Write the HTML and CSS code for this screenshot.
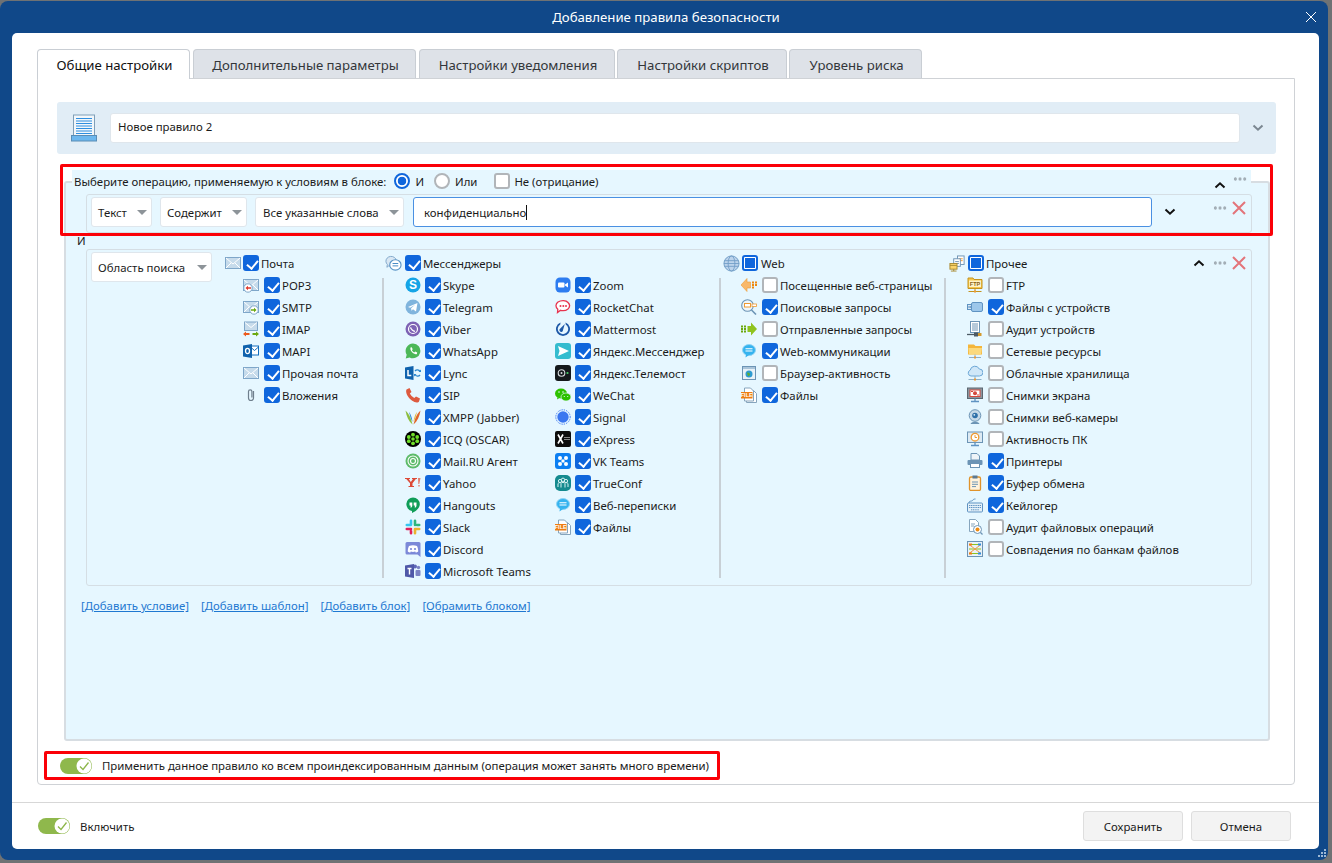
FILE: index.html
```html
<!DOCTYPE html>
<html lang="ru">
<head>
<meta charset="utf-8">
<title>Добавление правила безопасности</title>
<link rel="stylesheet" href="styles.css">
</head>
<body>
<svg class="defs" aria-hidden="true">
  <symbol id="mail" viewBox="0 0 16 16"><rect x=".5" y="2.500" width="15" height="11" fill="#c6dbeb" stroke="#7ea6c9"/><path d="M1 3l7 6 7-6M1 13l5-5M15 13l-5-5" fill="none" stroke="#fff"/></symbol>
  <symbol id="pop3" viewBox="0 0 16 16"><use href="#mail"/><circle cx="5" cy="11" r="4.200" fill="#fff" stroke="#7ea6c9"/><path d="M2.500 11L5 8.800v1.400h3v1.600H5v1.400z" fill="#e0392b"/></symbol>
  <symbol id="smtp" viewBox="0 0 16 16"><use href="#mail"/><circle cx="11" cy="11" r="4.200" fill="#fff" stroke="#7ea6c9"/><path d="M13.500 11L11 8.800v1.400H8v1.600h3v1.400z" fill="#6aa80e"/></symbol>
  <symbol id="imap" viewBox="0 0 16 16"><rect x="1.500" y="1" width="13" height="8.500" fill="#c6dbeb" stroke="#7ea6c9"/><path d="M2 1.500l6 5 6-5" fill="none" stroke="#fff"/><path d="M0 13l3-2.400v1.500h3.500v1.800H3v1.500z" fill="#ec5a1c"/><path d="M16 13l-3-2.400v1.500H9.500v1.800H13v1.500z" fill="#6aa80e"/></symbol>
  <symbol id="mapi" viewBox="0 0 16 16"><rect x="7" y="3" width="8.500" height="9" fill="#fff" stroke="#0f6cbd"/><path d="M7.500 4l4 3.500 4-3.500" fill="none" stroke="#0f6cbd"/><path d="M0 2.500L9 1v14L0 13.500z" fill="#0f62ad"/><ellipse cx="4.500" cy="8" rx="2" ry="2.600" fill="none" stroke="#fff" stroke-width="1.300"/></symbol>
  <symbol id="clip" viewBox="0 0 16 16"><path d="M10.500 4v7a2.500 2.500 0 0 1-5 0V4.500a1.700 1.700 0 0 1 3.400 0V10.500" fill="none" stroke="#6f7f8d" stroke-width="1.200"/></symbol>
  <symbol id="msg" viewBox="0 0 18 18"><path d="M1 7a5.500 5 0 0 1 11-1l-6 6-2-.5L2 13l.5-3A5 5 0 0 1 1 7z" fill="#d8e7f3" stroke="#7ea6c9"/><ellipse cx="11" cy="10.500" rx="6" ry="5.500" fill="#fff" stroke="#5a94c6" stroke-width="1.200"/><path d="M8 9h6M8 11.500h6" stroke="#3f86c4"/></symbol>
  <symbol id="tg" viewBox="0 0 16 16"><circle cx="8" cy="8" r="7.500" fill="#7fb4dd"/><path d="M3 8l9.500-4-1.500 8.500-3-2.200-1.500 1.500-.4-2.500 4-3.500-5 3z" fill="#fff"/></symbol>
  <symbol id="viber" viewBox="0 0 16 16"><circle cx="8" cy="8" r="7.500" fill="#7d62b4"/><circle cx="8" cy="8" r="4.500" fill="none" stroke="#fff" stroke-width="1.200"/><path d="M6 6l1 2 2 1.500 1.200.2-.4 1.200C8 11 5.500 8.500 5 6.800z" fill="#fff"/></symbol>
  <symbol id="wa" viewBox="0 0 16 16"><path d="M8 .5a7.400 7.400 0 0 0-6.300 11.200L.7 15.500l3.900-1A7.400 7.400 0 1 0 8 .5z" fill="#4cb858"/><path d="M5.500 4.500l1.200-.2 1 2-.8 1a5 5 0 0 0 2.300 2.200l1-.9 2 1-.3 1.300c-2 1.300-7.500-2.600-6.400-6.400z" fill="#fff"/></symbol>
  <symbol id="lync" viewBox="0 0 16 16"><path d="M0 2.500L8.500 1v14L0 13.500z" fill="#0f62ad"/><path d="M3 5v5.500h3.300" fill="none" stroke="#fff" stroke-width="1.500"/><path d="M10 6a3 3 0 0 1 5 .5M15 10a3 3 0 0 1-5-.5" fill="none" stroke="#2a86cf" stroke-width="1.300"/><path d="M13.500 7h2.500V4.500zM11.500 9H9v2.500z" fill="#2a86cf"/></symbol>
  <symbol id="sip" viewBox="0 0 16 16"><path d="M1.500 2.500L4.500 1l2 4-1.700 1.500a10 10 0 0 0 4.500 4.500L11 9.500l4 2-1 3c-.5 1-2.500 1.300-4.500.5-3.500-1.500-7-5-8-8.500-.5-2-.5-3 0-4z" fill="#dd5a3f"/></symbol>
  <symbol id="xmpp" viewBox="0 0 16 16"><path d="M.5 1.500c1 6 3 10.500 7 14C6 10 4.500 5 .5 1.500z" fill="#8cbe3f"/><path d="M15.500 1.500c-1 6-3 10.500-7 14C10 10 11.500 5 15.500 1.500z" fill="#e0662a"/><path d="M4 3c1 4 2 7 3.500 10C7 9 6 5.500 4 3z" fill="#2a86cf"/><path d="M12 3c-1 4-2 7-3.500 10C9 9 10 5.500 12 3z" fill="#e9b52f"/></symbol>
  <symbol id="icq" viewBox="0 0 16 16"><circle cx="8" cy="8" r="8"/><g fill="#6fe02a"><circle cx="8" cy="3.700" r="1.900"/><circle cx="8" cy="12.300" r="1.900"/><circle cx="3.800" cy="6" r="1.900"/><circle cx="12.200" cy="6" r="1.900"/><circle cx="3.800" cy="10.200" r="1.900"/><circle cx="12.200" cy="10.200" r="1.900"/><circle cx="8" cy="8" r="1.800"/></g></symbol>
  <symbol id="mailru" viewBox="0 0 16 16"><circle cx="8" cy="8" r="7.500" fill="#5dbb6a"/><circle cx="8" cy="8" r="5" fill="none" stroke="#fff" stroke-width="1.100"/><circle cx="8" cy="8" r="2.500" fill="none" stroke="#fff" stroke-width="1.100"/></symbol>
  <symbol id="yahoo" viewBox="0 0 16 16"><path d="M0 3h5v1H3.800l2 3 2.200-3H7V3h5v1h-1.200L7.500 8.300V11H9v1H3.500v-1H5V8.300L1.300 4H0z" fill="#dc4a38"/><path d="M13 3h2.500L14.300 9h-1zM13.300 10h1.400v1.600h-1.400z" fill="#e37e6f"/></symbol>
  <symbol id="hang" viewBox="0 0 16 16"><path d="M8 .5a6.800 6.800 0 0 0-1 13.500V16c4-1.500 7.500-5 7.800-8.500A6.800 6.800 0 0 0 8 .5z" fill="#0f9d58"/><path d="M4.500 5.500H7.300v3c0 1-.7 2-1.700 2.200V8.500H4.500zM8.700 5.500h2.800v3c0 1-.7 2-1.700 2.200V8.500H8.700z" fill="#fff"/></symbol>
  <symbol id="slack" viewBox="0 0 16 16"><g fill="none" stroke-width="2.600" stroke-linecap="round"><path d="M6 1.800v4M1.800 6h4" stroke="#36c5f0"/><path d="M10 1.800v4.200M14.200 6H12" stroke="#2eb67d"/><path d="M10 14.200V10M14.200 10H10" stroke="#ecb22e"/><path d="M6 14.200V12M1.800 10H6" stroke="#e01e5a"/></g></symbol>
  <symbol id="discord" viewBox="0 0 16 16"><path d="M2 1h12a1.500 1.500 0 0 1 1.500 1.500V16l-3-2.500H2A1.500 1.500 0 0 1 .5 12V2.500A1.500 1.500 0 0 1 2 1z" fill="#7c89d8"/><path d="M4 5c2.500-1 5.500-1 8 0 1 2 1.300 4 1.200 5.500-1 .8-1.700 1-2.500 1l-.5-1c-1.500.5-2.900.5-4.400 0l-.5 1c-.8 0-1.500-.2-2.500-1C2.700 9 3 7 4 5z" fill="#fff"/><circle cx="6" cy="8" r="1.100" fill="#7c89d8"/><circle cx="10" cy="8" r="1.100" fill="#7c89d8"/></symbol>
  <symbol id="teams" viewBox="0 0 16 16"><circle cx="13.500" cy="4.500" r="1.700" fill="#7b83c4"/><rect x="10.500" y="7" width="5" height="6" rx="1" fill="#7b83c4"/><circle cx="10" cy="3.500" r="2" fill="#5f68b8"/><path d="M0 2.500L9 1v14L0 13.500z" fill="#4f58a8"/><path d="M2.500 5.500h4M4.500 5.500v6" stroke="#fff" stroke-width="1.400"/></symbol>
  <symbol id="zoom" viewBox="0 0 16 16"><rect x=".5" y=".5" width="15" height="15" rx="4.500" fill="#2d7cf0"/><rect x="3" y="5.500" width="6.500" height="5" rx="1" fill="#fff"/><path d="M10 7.500l3-2v5l-3-2z" fill="#fff"/></symbol>
  <symbol id="rocket" viewBox="0 0 16 16"><path d="M3 3c3-2 8-2 10 .5 2 2 2 4.500 0 6.500-2 1.600-5 2-7.500 1.300L2.500 13.500l.3-3.300C.2 8 .5 5 3 3z" fill="#fff" stroke="#e7344f" stroke-width="1.300"/><g fill="#e7344f"><circle cx="5.500" cy="7" r="1"/><circle cx="8.300" cy="7" r="1"/><circle cx="11" cy="7" r="1"/></g></symbol>
  <symbol id="matter" viewBox="0 0 16 16"><path d="M5.500 1.500a7 7 0 1 0 5 0l.2 2a5.200 5.200 0 1 1-5.400 0z" fill="#1e59a8"/><path d="M9.800 3L8 9a1.800 1.800 0 1 1-2.700-1.400z" fill="#1e59a8"/></symbol>
  <symbol id="yamsg" viewBox="0 0 16 16"><rect width="16" height="16" rx="3" fill="#34bccf"/><path d="M3 3l11 5-11 5 1.500-5z" fill="#fff"/></symbol>
  <symbol id="yatele" viewBox="0 0 16 16"><rect width="16" height="16" rx="3" fill="#14191c"/><circle cx="6.500" cy="8" r="3.300" fill="none" stroke="#d8dcdf" stroke-width="1.100"/><circle cx="6.500" cy="8" r="1" fill="#d8dcdf"/><circle cx="12.500" cy="8" r="1.100" fill="#45d16a"/></symbol>
  <symbol id="wechat" viewBox="0 0 16 16"><ellipse cx="6" cy="6.500" rx="6" ry="5" fill="#2dc100"/><path d="M2.500 10l-.5 2.500 2.500-1.500z" fill="#2dc100"/><ellipse cx="11" cy="10" rx="5" ry="4" fill="#2dc100" stroke="#e6f7ff" stroke-width=".7"/><g fill="#e6f7ff"><circle cx="4" cy="5" r=".8"/><circle cx="8" cy="5" r=".8"/><circle cx="9.300" cy="9.500" r=".6"/><circle cx="12.700" cy="9.500" r=".6"/></g></symbol>
  <symbol id="signal" viewBox="0 0 16 16"><circle cx="8" cy="8" r="5.700" fill="#3a76f0"/><circle cx="8" cy="8" r="7.200" fill="none" stroke="#3a76f0" stroke-dasharray="1.300 1"/></symbol>
  <symbol id="express" viewBox="0 0 16 16"><rect width="16" height="16" rx="2" fill="#0d0d0d"/><path d="M3 3.500l5 9M8 3.500l-5 9" stroke="#fff" stroke-width="1.600"/><path d="M10 6v4M12 6v4M14 6v4" stroke="#fff" stroke-dasharray="1 1"/></symbol>
  <symbol id="vk" viewBox="0 0 16 16"><rect width="16" height="16" rx="3" fill="#0d7ff2"/><g fill="#fff"><circle cx="5" cy="5" r="2"/><circle cx="11" cy="5" r="2"/><circle cx="5" cy="11" r="2"/><circle cx="11" cy="11" r="2"/><rect x="6.500" y="6.500" width="3" height="3"/></g></symbol>
  <symbol id="trueconf" viewBox="0 0 16 16"><rect width="16" height="16" rx="5" fill="#148a8f"/><g fill="none" stroke="#d8f2f2"><circle cx="5" cy="6" r="1.600"/><circle cx="8" cy="4.800" r="1.700"/><circle cx="11" cy="6" r="1.600"/><path d="M3 12V9c0-1 1-1.400 2-1.400M13 12V9c0-1-1-1.400-2-1.400M6 12.500V8.500c0-1.400 4-1.400 4 0v4"/></g></symbol>
  <symbol id="webchat" viewBox="0 0 16 16"><ellipse cx="8" cy="7" rx="6.500" ry="5.500" fill="#35b3ef" stroke="#8fd4f5"/><path d="M5 11l-.5 3.500L8 12z" fill="#35b3ef"/><path d="M4.500 5.800h7M4.500 8h7" stroke="#fff" stroke-width="1.100"/></symbol>
  <symbol id="file" viewBox="0 0 16 16"><path d="M5.500 3.500h7l3 3v9h-10z" fill="#fff" stroke="#86a5bd"/><path d="M3.500 1h6l3 3v10h-9z" fill="#fff" stroke="#86a5bd"/><rect x="0" y="5" width="11.500" height="6.500" fill="#ee7d12"/></symbol>
  <symbol id="globe" viewBox="0 0 18 18"><circle cx="9" cy="9" r="8" fill="#bcd4ec" stroke="#6f9cc6"/><ellipse cx="9" cy="9" rx="3.600" ry="8" fill="none" stroke="#6f9cc6" stroke-width=".9"/><path d="M1.500 6h15M1.500 12h15M1 9h16" stroke="#6f9cc6" stroke-width=".9"/></symbol>
  <symbol id="visited" viewBox="0 0 16 16"><path d="M0 8l6-6.500V5h3.500v6H6v3.500z" fill="#f8b86a" stroke="#ee9a32" stroke-width=".6"/><g fill="#ee8a10"><rect x="11" y="4.500" width="2" height="2"/><rect x="14" y="4.500" width="2" height="2"/><rect x="11" y="7" width="2" height="2"/><rect x="14" y="7" width="2" height="2"/><rect x="11" y="9.500" width="2" height="2"/></g></symbol>
  <symbol id="search" viewBox="0 0 16 16"><circle cx="6.500" cy="6.500" r="5.800" fill="#eef6fb" stroke="#6c94b5" stroke-width="1.100"/><path d="M10.500 11l4.500 4.500" stroke="#6c94b5" stroke-width="1.600"/><rect x="3.500" y="4.500" width="6" height="3.500" fill="#fff" stroke="#ee9a32"/><rect x="11" y="5" width="4.500" height="2.500" fill="#fff" stroke="#ee9a32" stroke-width=".8"/></symbol>
  <symbol id="sent" viewBox="0 0 16 16"><path d="M16 8l-6-6.500V5H6.500v6H10v3.500z" fill="#8fc31f"/><g fill="#6aa80e"><rect y="4.500" width="2" height="2"/><rect x="3" y="4.500" width="2" height="2"/><rect y="7" width="2" height="2"/><rect x="3" y="7" width="2" height="2"/><rect y="9.500" width="2" height="2"/><rect x="3" y="9.500" width="2" height="2"/></g></symbol>
  <symbol id="browser" viewBox="0 0 16 16"><rect x="1.500" y="1.500" width="13" height="13" fill="#e8f1f7" stroke="#6c94b5"/><rect x="2" y="2" width="12" height="2" fill="#a9c4d9"/><circle cx="8" cy="9" r="3.500" fill="#2d9bd1"/><path d="M6 7.500l2.500.5.500 2-2 1.200z" fill="#5fae2c"/></symbol>
  <symbol id="other" viewBox="0 0 18 18"><rect x="9" y="1" width="7" height="9" fill="#fff" stroke="#6c94b5"/><path d="M10.500 4h4M10.500 6h4" stroke="#ee9a32"/><rect x="5" y="4" width="7" height="8" fill="#fff" stroke="#6c94b5"/><path d="M6.500 7h4M6.500 9h4" stroke="#6c94b5"/><rect x="1" y="9" width="7.500" height="6" fill="#fbd46a" stroke="#a98a30"/><path d="M1 11h7.500M5 15v2M2 17h6" stroke="#a98a30"/></symbol>
  <symbol id="ftpbox" viewBox="0 0 16 16"><path d="M1 1h5l1 1.500h8v9H1z" fill="#f7c64b" stroke="#c49420"/><rect x="2" y="3.500" width="12" height="6.500" fill="#fff3c6"/><path d="M8 11.500v3M1.500 14.500h13" stroke="#c49420"/><rect x="7" y="13.500" width="2" height="2" fill="#ee9a32"/></symbol>
  <symbol id="usb" viewBox="0 0 16 16"><rect x="4.500" y="3.500" width="11" height="9" rx="1.500" fill="#9dc7ea" stroke="#5f93c2"/><rect x=".5" y="5.500" width="4" height="5" fill="#d8e7f3" stroke="#5f93c2"/><path d="M2 7v2M3.300 7v2" stroke="#5f93c2"/></symbol>
  <symbol id="audit" viewBox="0 0 16 16"><rect x="3.500" y=".5" width="9" height="11" fill="#fff" stroke="#6c94b5"/><path d="M5 3h6M5 5h6M5 7h6M5 9h6" stroke="#6c94b5"/><path d="M0 13.500h7" stroke="#4d5a64" stroke-width="1.300"/><rect x="7" y="11.500" width="4" height="4" fill="#4d5a64"/><rect x="11" y="12" width="3.500" height="3" fill="#d59a2c"/></symbol>
  <symbol id="share" viewBox="0 0 16 16"><path d="M1 1.500h6l1.500 1.500H15v8.500H1z" fill="#f4b63b"/><path d="M1.500 5h13.500l-1 6.500H2z" fill="#fbd97d"/><path d="M8 11.500v3M2 14.500h12" stroke="#8fb0c7"/><rect x="7" y="13.500" width="2" height="2" fill="#ee9a32"/></symbol>
  <symbol id="cloud" viewBox="0 0 16 16"><path d="M4 11a3 3 0 0 1-.8-5.800A4.800 4.800 0 0 1 12.300 4 3.500 3.500 0 0 1 12.500 11z" fill="#cfe7f8" stroke="#6ca7d6"/><path d="M8 11v3.500M1.500 14.500h13" stroke="#8fb0c7"/><rect x="7" y="13.500" width="2" height="2" fill="#ee9a32"/></symbol>
  <symbol id="screen" viewBox="0 0 16 16"><rect x=".5" y="1" width="15" height="10.500" fill="#8a959e" stroke="#5c6770"/><rect x="3" y="3" width="10" height="6.500" fill="#fff" stroke="#d64a3c"/><circle cx="8" cy="6.200" r="2" fill="#d64a3c"/><path d="M6 4.500H4M10 8h2" stroke="#d64a3c"/><path d="M8 11.500v2.500M4 14.500h8" stroke="#5f93c2" stroke-width="1.300"/></symbol>
  <symbol id="webcam" viewBox="0 0 16 16"><circle cx="8" cy="6.500" r="5.800" fill="#c7d9e8" stroke="#6c94b5"/><circle cx="8" cy="6.500" r="2.800" fill="#2f6fa8"/><circle cx="7.300" cy="5.800" r=".9" fill="#dcecf7"/><path d="M3.500 15c1-3 8-3 9 0z" fill="#6c94b5"/></symbol>
  <symbol id="pcact" viewBox="0 0 16 16"><rect x=".5" y="1" width="15" height="10.500" fill="#dceaf4" stroke="#6c94b5"/><circle cx="8" cy="6.200" r="3.800" fill="#fff" stroke="#ee9a32" stroke-width="1.300"/><path d="M8 4v2.500h2" fill="none" stroke="#ee9a32"/><path d="M8 11.500v2.500M4 14.500h8" stroke="#5f93c2" stroke-width="1.300"/></symbol>
  <symbol id="printer" viewBox="0 0 16 16"><path d="M4 .5h6l2.500 2.500v4H4z" fill="#eef4f8" stroke="#6c94b5"/><rect x=".5" y="7" width="15" height="5" rx="1" fill="#6c94b5"/><rect x="3.500" y="10.500" width="9" height="4" fill="#fff" stroke="#6c94b5"/></symbol>
  <symbol id="clipb" viewBox="0 0 16 16"><rect x="2.500" y="2" width="11" height="13.500" rx="1.500" fill="#fff3dc" stroke="#e0932b" stroke-width="1.300"/><rect x="5.500" y=".5" width="5" height="3" fill="#5d7a92"/><path d="M5 7h6M5 9.300h6M5 11.600h4" stroke="#6c94b5"/></symbol>
  <symbol id="keyb" viewBox="0 0 16 16"><rect x=".5" y="6" width="15" height="9" rx="1" fill="#e4f0f8" stroke="#5f93c2"/><path d="M2 8.500h12M2 10.500h12M4 12.800h8" stroke="#5f93c2" stroke-dasharray="1.200 .6"/><path d="M2 6c0-3 3-1 4-3 .4-1 1.500-1 2.500-1" fill="none" stroke="#5f93c2"/></symbol>
  <symbol id="fileop" viewBox="0 0 16 16"><path d="M2.500.5h6l3 3v9h-9z" fill="#fff" stroke="#86a5bd"/><path d="M4 5h4M4 7h3" stroke="#86a5bd"/><circle cx="10.500" cy="10.500" r="4" fill="#fff" stroke="#6c94b5"/><circle cx="10.500" cy="10.500" r="2" fill="#ee8a10"/><path d="M13.500 13.500l2 2" stroke="#6c94b5" stroke-width="1.300"/></symbol>
  <symbol id="bank" viewBox="0 0 16 16"><rect x=".5" y=".5" width="15" height="15" fill="#e8f1f7" stroke="#6c94b5"/><path d="M2 3.500h12M2 8h12M2 12.500h12" stroke="#8fc31f"/><path d="M2 3.500l12 9M2 12.500l12-9" stroke="#f09a4a"/><path d="M2 2.500h3v2H2zM2 11.500h3v2H2z" fill="#ee7d12"/><path d="M11 2.500h3v2h-3zM11 11.500h3v2h-3z" fill="#2e8fe0"/></symbol>
  <symbol id="up" viewBox="0 0 12 8"><path d="M1.500 6.500L6 2.300l4.500 4.200" fill="none" stroke="#111" stroke-width="2"/></symbol>
  <symbol id="down" viewBox="0 0 12 8"><path d="M1.500 1.500L6 5.700l4.500-4.200" fill="none" stroke="#111" stroke-width="2"/></symbol>
  <symbol id="x" viewBox="0 0 14 14"><path d="M1 1l12 12M13 1L1 13" stroke="#e3747a" stroke-width="2"/></symbol>
  <symbol id="tick" viewBox="0 0 18 18"><circle cx="9" cy="9" r="7.500" fill="#fff"/><path d="M5 9.500l3 3 5.500-7" fill="none" stroke="#8db64a" stroke-width="1.300"/></symbol>
</svg>

<div class="window">
  <header class="titlebar">
    <span></span>
    <span class="title">Добавление правила безопасности</span>
    <svg class="close" viewBox="0 0 12 12"><path d="M1 1l10 10M11 1L1 11" stroke="#fff" stroke-width="1"/></svg>
  </header>
  <div class="sheet">
    <main class="content">
      <nav class="tabs">
        <span class="tab active">Общие настройки</span>
        <span class="tab t2">Дополнительные параметры</span>
        <span class="tab t3">Настройки уведомления</span>
        <span class="tab t4">Настройки скриптов</span>
        <span class="tab t5">Уровень риска</span>
      </nav>
      <section class="panel">
        <div class="mark mark-top"></div>
        <div class="namebar">
          <svg class="rule-icon" viewBox="0 0 26 28"><rect x="2.500" y="1" width="21" height="21" fill="#f2f7fb" stroke="#7f9fb8"/><path d="M5 4.500h16M5 7h16M5 9.500h16M5 12h16M5 14.500h16M5 17h16M5 19.500h16" stroke="#2e8fe0"/><rect x=".5" y="21.500" width="25" height="5.500" fill="#6cb7ee" stroke="#5a8db5"/></svg>
          <div class="name-input">Новое правило 2</div>
          <svg class="chev-grey" viewBox="0 0 12 8"><path d="M1.500 1.500L6 5.700l4.500-4.200" fill="none" stroke="#7b8791" stroke-width="2"/></svg>
        </div>

        <div class="block">
          <div class="block-head">
            <span>Выберите операцию, применяемую к условиям в блоке:</span>
            <span class="radio on"></span><span class="op-and">И</span>
            <span class="radio"></span><span class="op-or">Или</span>
            <span class="cb neg"></span><span>Не (отрицание)</span>
            <svg class="tool-up head-up"><use href="#up"/></svg>
            <span class="dots head-dots"></span>
          </div>

          <div class="cond cond-text">
            <div class="select s-type">Текст<i></i></div>
            <div class="select s-mode">Содержит<i></i></div>
            <div class="select s-words">Все указанные слова<i></i></div>
            <div class="text-input">конфиденциально<b></b></div>
            <svg class="tool-down"><use href="#down"/></svg>
            <span class="dots cond-dots"></span>
            <svg class="tool-x"><use href="#x"/></svg>
          </div>

          <div class="op-label">И</div>

          <div class="cond cond-scope">
            <div class="select s-scope">Область поиска<i></i></div>

            <div class="cat cat-mail">
              <div class="head"><svg class="hico"><use href="#mail"/></svg><span class="cb on"></span><span>Почта</span></div>
              <div class="body"><div class="list">
                <div class="row"><svg><use href="#pop3"/></svg><span class="cb on"></span><span>POP3</span></div>
                <div class="row"><svg><use href="#smtp"/></svg><span class="cb on"></span><span>SMTP</span></div>
                <div class="row"><svg><use href="#imap"/></svg><span class="cb on"></span><span>IMAP</span></div>
                <div class="row"><svg><use href="#mapi"/></svg><span class="cb on"></span><span>MAPI</span></div>
                <div class="row"><svg><use href="#mail"/></svg><span class="cb on"></span><span>Прочая почта</span></div>
                <div class="row"><svg><use href="#clip"/></svg><span class="cb on"></span><span>Вложения</span></div>
              </div></div>
            </div>

            <div class="cat cat-msg">
              <div class="head"><svg class="hico"><use href="#msg"/></svg><span class="cb on"></span><span>Мессенджеры</span></div>
              <div class="body lined"><div class="list l1">
                <div class="row"><svg viewBox="0 0 16 16"><circle cx="8" cy="8" r="7.500" fill="#14a4e6"/><text class="logo-s" x="8" y="12">S</text></svg><span class="cb on"></span><span>Skype</span></div>
                <div class="row"><svg><use href="#tg"/></svg><span class="cb on"></span><span>Telegram</span></div>
                <div class="row"><svg><use href="#viber"/></svg><span class="cb on"></span><span>Viber</span></div>
                <div class="row"><svg><use href="#wa"/></svg><span class="cb on"></span><span>WhatsApp</span></div>
                <div class="row"><svg><use href="#lync"/></svg><span class="cb on"></span><span>Lync</span></div>
                <div class="row"><svg><use href="#sip"/></svg><span class="cb on"></span><span>SIP</span></div>
                <div class="row"><svg><use href="#xmpp"/></svg><span class="cb on"></span><span>XMPP (Jabber)</span></div>
                <div class="row"><svg><use href="#icq"/></svg><span class="cb on"></span><span>ICQ (OSCAR)</span></div>
                <div class="row"><svg><use href="#mailru"/></svg><span class="cb on"></span><span>Mail.RU Агент</span></div>
                <div class="row"><svg><use href="#yahoo"/></svg><span class="cb on"></span><span>Yahoo</span></div>
                <div class="row"><svg><use href="#hang"/></svg><span class="cb on"></span><span>Hangouts</span></div>
                <div class="row"><svg><use href="#slack"/></svg><span class="cb on"></span><span>Slack</span></div>
                <div class="row"><svg><use href="#discord"/></svg><span class="cb on"></span><span>Discord</span></div>
                <div class="row"><svg><use href="#teams"/></svg><span class="cb on"></span><span>Microsoft Teams</span></div>
              </div><div class="list">
                <div class="row"><svg><use href="#zoom"/></svg><span class="cb on"></span><span>Zoom</span></div>
                <div class="row"><svg><use href="#rocket"/></svg><span class="cb on"></span><span>RocketChat</span></div>
                <div class="row"><svg><use href="#matter"/></svg><span class="cb on"></span><span>Mattermost</span></div>
                <div class="row"><svg><use href="#yamsg"/></svg><span class="cb on"></span><span>Яндекс.Мессенджер</span></div>
                <div class="row"><svg><use href="#yatele"/></svg><span class="cb on"></span><span>Яндекс.Телемост</span></div>
                <div class="row"><svg><use href="#wechat"/></svg><span class="cb on"></span><span>WeChat</span></div>
                <div class="row"><svg><use href="#signal"/></svg><span class="cb on"></span><span>Signal</span></div>
                <div class="row"><svg><use href="#express"/></svg><span class="cb on"></span><span>eXpress</span></div>
                <div class="row"><svg><use href="#vk"/></svg><span class="cb on"></span><span>VK Teams</span></div>
                <div class="row"><svg><use href="#trueconf"/></svg><span class="cb on"></span><span>TrueConf</span></div>
                <div class="row"><svg><use href="#webchat"/></svg><span class="cb on"></span><span>Веб-переписки</span></div>
                <div class="row"><svg viewBox="0 0 16 16"><use href="#file"/><text class="logo-file" x="5.700" y="10.400">FILE</text></svg><span class="cb on"></span><span>Файлы</span></div>
              </div></div>
            </div>

            <div class="cat cat-web">
              <div class="head"><svg class="hico"><use href="#globe"/></svg><span class="cb part"></span><span>Web</span></div>
              <div class="body lined"><div class="list">
                <div class="row"><svg><use href="#visited"/></svg><span class="cb"></span><span>Посещенные веб-страницы</span></div>
                <div class="row"><svg><use href="#search"/></svg><span class="cb on"></span><span>Поисковые запросы</span></div>
                <div class="row"><svg><use href="#sent"/></svg><span class="cb"></span><span>Отправленные запросы</span></div>
                <div class="row"><svg><use href="#webchat"/></svg><span class="cb on"></span><span>Web-коммуникации</span></div>
                <div class="row"><svg><use href="#browser"/></svg><span class="cb"></span><span>Браузер-активность</span></div>
                <div class="row"><svg viewBox="0 0 16 16"><use href="#file"/><text class="logo-file" x="5.700" y="10.400">FILE</text></svg><span class="cb on"></span><span>Файлы</span></div>
              </div></div>
            </div>

            <div class="cat cat-other">
              <div class="head"><svg class="hico"><use href="#other"/></svg><span class="cb part"></span><span>Прочее</span>
                <svg class="tool-up scope-up"><use href="#up"/></svg>
                <span class="dots scope-dots"></span>
                <svg class="tool-x"><use href="#x"/></svg>
              </div>
              <div class="body lined"><div class="list">
                <div class="row"><svg viewBox="0 0 16 16"><use href="#ftpbox"/><text class="logo-ftp" x="8" y="9.300">FTP</text></svg><span class="cb"></span><span>FTP</span></div>
                <div class="row"><svg><use href="#usb"/></svg><span class="cb on"></span><span>Файлы с устройств</span></div>
                <div class="row"><svg><use href="#audit"/></svg><span class="cb"></span><span>Аудит устройств</span></div>
                <div class="row"><svg><use href="#share"/></svg><span class="cb"></span><span>Сетевые ресурсы</span></div>
                <div class="row"><svg><use href="#cloud"/></svg><span class="cb"></span><span>Облачные хранилища</span></div>
                <div class="row"><svg><use href="#screen"/></svg><span class="cb"></span><span>Снимки экрана</span></div>
                <div class="row"><svg><use href="#webcam"/></svg><span class="cb"></span><span>Снимки веб-камеры</span></div>
                <div class="row"><svg><use href="#pcact"/></svg><span class="cb"></span><span>Активность ПК</span></div>
                <div class="row"><svg><use href="#printer"/></svg><span class="cb on"></span><span>Принтеры</span></div>
                <div class="row"><svg><use href="#clipb"/></svg><span class="cb on"></span><span>Буфер обмена</span></div>
                <div class="row"><svg><use href="#keyb"/></svg><span class="cb on"></span><span>Кейлогер</span></div>
                <div class="row"><svg><use href="#fileop"/></svg><span class="cb"></span><span>Аудит файловых операций</span></div>
                <div class="row"><svg><use href="#bank"/></svg><span class="cb"></span><span>Совпадения по банкам файлов</span></div>
              </div></div>
            </div>
          </div>

          <div class="links">
            <a href="#">[Добавить условие]</a>
            <a href="#">[Добавить шаблон]</a>
            <a href="#">[Добавить блок]</a>
            <a href="#">[Обрамить блоком]</a>
          </div>
        </div>

        <div class="apply">
          <span class="toggle"><svg><use href="#tick"/></svg></span>
          <span>Применить данное правило ко всем проиндексированным данным (операция может занять много времени)</span>
        </div>
      </section>
    </main>
    <footer class="footer">
      <span class="toggle"><svg><use href="#tick"/></svg></span>
      <span class="enable">Включить</span>
      <button class="btn save">Сохранить</button>
      <button class="btn">Отмена</button>
    </footer>
  </div>
  <svg class="grip" viewBox="0 0 12 12"><g fill="#9db7d3"><rect x="9" y="1" width="2" height="2"/><rect x="6" y="4" width="2" height="2"/><rect x="9" y="4" width="2" height="2"/><rect x="3" y="7" width="2" height="2"/><rect x="6" y="7" width="2" height="2"/><rect x="9" y="7" width="2" height="2"/></g></svg>
</div>
</body>
</html>
```

FILE: styles.css
```css
* { box-sizing: border-box; }
html, body { margin: 0; height: 100%; }
body {
  background: #6f7274;
  font-family: "Noto Sans", "Open Sans", sans-serif;
  font-size: 11.4px;
  color: #1b1b1b;
  overflow: hidden;
  padding-top: 1px;
}
.defs { position: absolute; width: 0; height: 0; }
.logo-s { font: 700 12px "Liberation Sans", sans-serif; fill: #fff; text-anchor: middle; }
.logo-file { font: 700 5.5px "Liberation Sans", sans-serif; fill: #fff; text-anchor: middle; }
.logo-ftp { font: 700 5.5px "Liberation Sans", sans-serif; fill: #8a5f10; text-anchor: middle; }

.window {
  position: relative;
  width: 1328px;
  height: 859px;
  background: #104889;
  border-radius: 8px;
  display: flex;
  flex-direction: column;
  padding: 0 9px 11px 12px;
}
.titlebar {
  height: 32px;
  flex: none;
  display: grid;
  grid-template-columns: 1fr auto 1fr;
  align-items: center;
  color: #fff;
  font-size: 13.2px;
}
.title { margin-left: 1px; }
.close { width: 12px; height: 12px; justify-self: end; margin-right: 2px; }
.sheet {
  flex: 1;
  min-height: 0;
  background: #fff;
  border-radius: 5px;
  display: flex;
  flex-direction: column;
}
.content {
  flex: 1;
  min-height: 0;
  display: flex;
  flex-direction: column;
  padding: 16px 24px 0 25px;
}

.tabs { display: flex; gap: 3px; height: 29px; flex: none; position: relative; z-index: 1; }
.tab {
  display: flex;
  align-items: center;
  justify-content: center;
  height: 29px;
  padding: 2px 0 0 2px;
  font-size: 13.2px;
  color: #33363a;
  background: #dee2e8;
  border: 1px solid #c9ced4;
  border-bottom: 0;
  border-radius: 4px 4px 0 0;
}
.tab.active { width: 153px; background: #fff; color: #111; height: 30px; padding-bottom: 1px; }
.t2 { width: 223px; }
.t3 { width: 196px; }
.t4 { width: 170px; margin-left: -1px; }
.t5 { width: 133px; margin-left: -1px; }

.panel {
  position: relative;
  flex: 1;
  min-height: 0;
  display: flex;
  flex-direction: column;
  border: 1px solid #cfd2d6;
  border-radius: 0 0 4px 4px;
  padding: 23px 18px 4px 19px;
}
.mark-top {
  position: absolute;
  left: 22px;
  top: 85px;
  width: 1213px;
  height: 72px;
  border: 3px solid #fb0007;
  border-radius: 2px;
  z-index: 2;
  pointer-events: none;
}

.namebar {
  flex: none;
  height: 52px;
  background: #e1edf6;
  border-radius: 3px;
  display: flex;
  align-items: center;
  padding: 0 12px 0 14px;
}
.rule-icon { width: 26px; height: 28px; margin-right: 13px; flex: none; }
.name-input {
  flex: 1;
  height: 30px;
  display: flex;
  align-items: center;
  background: #fff;
  border: 1px solid #dfe6ec;
  border-radius: 3px;
  padding: 0 0 3px 7px;
}
.chev-grey { width: 12px; height: 8px; margin-left: 12px; flex: none; }

.block {
  flex: 1;
  min-height: 0;
  margin: 27px 6px 0 7px;
  background: #e6f7ff;
  border: 2px solid #d7dde2;
  border-radius: 3px;
  display: flex;
  flex-direction: column;
}
.block-head {
  flex: none;
  height: 24px;
  margin: -13px 17px 0 6px;
  padding: 0 0 2px 2px;
  background: #e6f7ff;
  display: flex;
  align-items: center;
  position: relative;
}
.radio {
  width: 16px;
  height: 16px;
  border-radius: 50%;
  border: 2px solid #b1b5b9;
  background: #fff;
  flex: none;
  margin-left: 8px;
}
.radio.on { border-color: #0f66dc; background: radial-gradient(circle, #0f66dc 0 4px, #fff 4.6px); }
.op-and { margin-left: 5px; margin-right: 10px; }
.radio + .op-or { margin-left: 5px; }
.op-and + .radio { margin-left: 0; }
.neg { margin-left: 17px; margin-right: 4px; }

.cb {
  width: 16px;
  height: 16px;
  flex: none;
  border-radius: 3px;
  border: 2px solid #b1b5b9;
  background: #fff;
  position: relative;
  display: inline-block;
}
.cb.on { background: #0f66dc; border-color: #0f66dc; }
.cb.on::after {
  content: "";
  position: absolute;
  left: 3.5px;
  top: 0.5px;
  width: 5px;
  height: 9px;
  border: solid #fff;
  border-width: 0 2.2px 2.2px 0;
  transform: rotate(40deg);
}
.cb.part { border-color: #0f66dc; }
.cb.part::after {
  content: "";
  position: absolute;
  inset: 1px;
  background: #0f66dc;
}

.dots {
  width: 14px;
  height: 4px;
  flex: none;
  background: radial-gradient(circle, #a3aeb6 1.4px, transparent 1.9px) 0 0 / 4.7px 4px repeat-x;
}
.tool-up, .tool-down { width: 12px; height: 8px; flex: none; }
.tool-x { width: 14px; height: 14px; flex: none; }
.head-up { position: absolute; left: 1142px; top: 11px; }
.head-dots { position: absolute; left: 1161px; top: 7px; }

.cond {
  border: 1px solid #d5dee4;
  border-radius: 3px;
  margin: 0 16px 0 20px;
  display: flex;
  flex: none;
}
.cond-text { height: 39px; padding: 2px 5px 0 4px; align-items: flex-start; }
.select {
  height: 30px;
  flex: none;
  background: #fff;
  border: 1px solid #dfe6ec;
  border-radius: 3px;
  padding: 0 4px 0 6px;
  display: flex;
  align-items: center;
  justify-content: space-between;
}
.select i {
  width: 0;
  height: 0;
  border: 5px solid transparent;
  border-top: 5px solid #8d9499;
  border-bottom: 0;
}
.s-type { width: 61px; margin-right: 8px; }
.s-mode { width: 87px; margin-right: 8px; }
.s-words { width: 149px; margin-right: 9px; padding-left: 7px; }
.s-scope { width: 121px; margin-right: 13px; margin-top: 1px; }
.text-input {
  width: 739px;
  flex: none;
  height: 30px;
  background: #fff;
  border: 1px solid #4a90e2;
  border-radius: 3px;
  padding-left: 10px;
  display: flex;
  align-items: center;
}
.text-input b { width: 1px; height: 15px; background: #111; }
.cond-text .tool-down { margin: 11px 0 0 12px; }
.cond-dots { margin: 9px 0 0 auto; }
.cond-text .tool-x { margin: 4px 0 0 5px; }

.op-label { height: 16px; line-height: 16px; margin-left: 11px; flex: none; }

.cond-scope { height: 337px; padding: 1px 0 7px 4px; }
.cat { display: flex; flex-direction: column; flex: none; }
.cat-mail { width: 160px; }
.cat-msg { width: 338px; }
.cat-web { width: 226px; }
.cat-other { flex: 1; }
.head { height: 23px; display: flex; align-items: center; flex: none; padding: 2px 0 1px; }
.head svg.hico { width: 17px; height: 17px; margin-right: 2px; flex: none; }
.cat-mail .head svg.hico { width: 16px; height: 16px; margin-right: 2px; }
.cat-msg .head svg.hico { margin-right: 3px; }
.head .cb { margin-right: 2px; }
.cat-web .head .cb { margin-right: 3px; }
.body { flex: 1; margin-top: 4px; min-height: 0; }
.cat-mail .body { padding-left: 18px; }
.lined { border-left: 2px solid #c8d0d6; display: flex; }
.cat-msg .lined { margin-left: -3px; padding-left: 21px; }
.cat-web .lined { margin-left: -4px; padding-left: 20px; }
.cat-other .lined { margin-left: -5px; padding-left: 21px; }
.list { margin-top: -4px; }
.l1 { width: 150px; flex: none; }
.row { height: 22px; display: flex; align-items: center; white-space: nowrap; }
.row svg { width: 16px; height: 16px; margin-right: 4px; flex: none; }
.row .cb { margin-right: 2px; }
.cat-mail .row svg, .cat-web .row svg, .cat-other .row svg { margin-right: 5px; }

.scope-up { margin-left: auto; }
.scope-dots { margin-left: 8px; }
.cat-other .head .tool-x { margin: 0 5px 0 5px; }

.links { display: flex; margin: 12px 0 0 15px; flex: none; }
.links a { color: #1f78d1; text-decoration: underline; }
.links a + a { margin-left: 12px; }

.apply {
  flex: none;
  height: 29px;
  margin: 10px 0 0 -13px;
  align-self: flex-start;
  width: 676px;
  border: 3px solid #fb0007;
  border-radius: 2px;
  padding-left: 13px;
  display: flex;
  align-items: center;
  white-space: nowrap;
}
.toggle {
  width: 32px;
  height: 16px;
  flex: none;
  border-radius: 8px;
  background: #8fb84c;
  display: flex;
  justify-content: flex-end;
  align-items: center;
  margin-right: 10px;
}
.toggle svg { width: 18px; height: 18px; margin-right: -1px; }

.footer {
  flex: none;
  height: 47px;
  margin-top: 17px;
  border-top: 1px solid #d7d7d7;
  display: flex;
  align-items: center;
  padding: 0 28px 0 26px;
}
.enable { margin-right: auto; }
.btn {
  width: 100px;
  height: 30px;
  font: inherit;
  color: #1b1b1b;
  background: #f3f3f3;
  border: 1px solid #dedede;
  border-radius: 3px;
  padding: 0;
}
.btn.save { margin-right: 8px; }
.grip { position: absolute; right: 1px; bottom: 0; width: 12px; height: 12px; }
```
